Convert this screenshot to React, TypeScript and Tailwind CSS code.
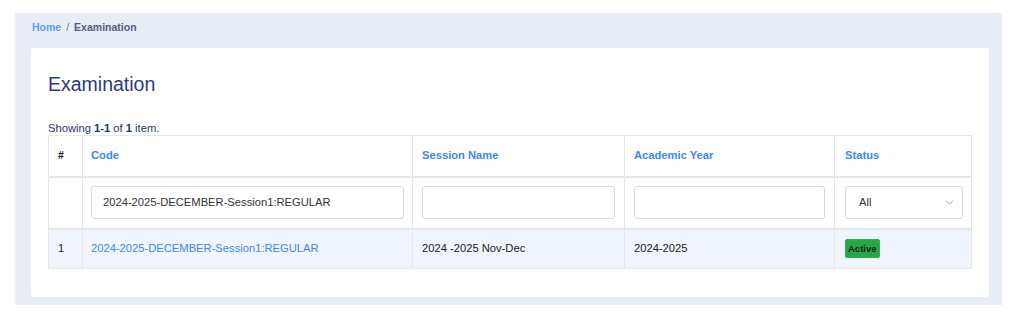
import React from "react";

export default function App() {
  const font = { fontFamily: '"Liberation Sans", Arial, Helvetica, sans-serif' };
  return (
    <div className="w-[1015px] h-[319px] bg-white pt-[13px] pl-[15px]" style={font}>
      <div className="w-[987px] h-[292px] bg-[#e9edf6] pl-[16px] pr-[13px] pt-[7px] flex flex-col">
        <div className="flex items-center text-[10.5px] font-bold leading-[14px] gap-[5px] pl-[1px]">
          <span className="text-[#5b9cf6]">Home</span>
          <span className="text-[#6b7280] font-normal">/</span>
          <span className="text-[#535c82]">Examination</span>
        </div>
        <div className="mt-[14px] h-[249px] bg-white rounded-[3px] px-[17px] pt-[24px]">
          <h1 className="text-[19.5px] leading-[24px] text-[#283a86]">Examination</h1>
          <div className="mt-[25px] text-[11.2px] leading-[14px] text-[#26336f]">
            <span>Showing </span>
            <b>1-1</b>
            <span> of </span>
            <b>1</b>
            <span> item.</span>
          </div>
          <table className="mt-0 border-collapse table-fixed w-[923px] text-[11.2px] text-[#212529]">
            <colgroup>
              <col className="w-[34px]" />
              <col className="w-[330px]" />
              <col className="w-[212px]" />
              <col className="w-[210px]" />
              <col className="w-[137px]" />
            </colgroup>
            <thead>
              <tr className="h-[41px]">
                <th className="border border-[#e3e6eb] border-b-2 px-[9px] text-left font-bold text-[10.5px] text-[#222]">#</th>
                <th className="border border-[#e3e6eb] border-b-2 px-[8px] text-left font-bold text-[#3d86f5]">Code</th>
                <th className="border border-[#e3e6eb] border-b-2 px-[9px] text-left font-bold text-[#3d86f5]">Session Name</th>
                <th className="border border-[#e3e6eb] border-b-2 px-[9px] text-left font-bold text-[#3d86f5]">Academic Year</th>
                <th className="border border-[#e3e6eb] border-b-2 px-[10px] text-left font-bold text-[#3d86f5]">Status</th>
              </tr>
            </thead>
            <tbody>
              <tr className="h-[52px]">
                <td className="border border-[#e3e6eb] border-b-2"></td>
                <td className="border border-[#e3e6eb] border-b-2 px-[8px]">
                  <div className="h-[33px] border border-[#d5d9de] rounded-[3px] flex items-center px-[11px] text-[#333]">
                    2024-2025-DECEMBER-Session1:REGULAR
                  </div>
                </td>
                <td className="border border-[#e3e6eb] border-b-2 px-[9px]">
                  <div className="h-[33px] border border-[#d5d9de] rounded-[3px]"></div>
                </td>
                <td className="border border-[#e3e6eb] border-b-2 px-[9px]">
                  <div className="h-[33px] border border-[#d5d9de] rounded-[3px]"></div>
                </td>
                <td className="border border-[#e3e6eb] border-b-2 pl-[10px] pr-[8px]">
                  <div className="h-[33px] border border-[#d5d9de] rounded-[3px] flex items-center justify-between pl-[13px] pr-[8px] text-[#333]">
                    <span>All</span>
                    <svg width="9" height="5" viewBox="0 0 10 6" fill="none">
                      <path d="M1 1l4 4 4-4" stroke="#888" strokeWidth="1" />
                    </svg>
                  </div>
                </td>
              </tr>
              <tr className="h-[40px] bg-[#eff4fd]">
                <td className="border border-[#e3e6eb] px-[9px] text-[#222]">1</td>
                <td className="border border-[#e3e6eb] px-[8px] text-[#3d86f5]">2024-2025-DECEMBER-Session1:REGULAR</td>
                <td className="border border-[#e3e6eb] px-[9px] text-[#222]">2024 -2025 Nov-Dec</td>
                <td className="border border-[#e3e6eb] px-[9px] text-[#222]">2024-2025</td>
                <td className="border border-[#e3e6eb] px-[10px]">
                  <span className="inline-flex items-center h-[19px] px-[2px] rounded-[2px] bg-[#28a745] text-[9.5px] font-bold text-[#10231a] border border-[#2bb04a]">
                    Active
                  </span>
                </td>
              </tr>
            </tbody>
          </table>
        </div>
      </div>
    </div>
  );
}
